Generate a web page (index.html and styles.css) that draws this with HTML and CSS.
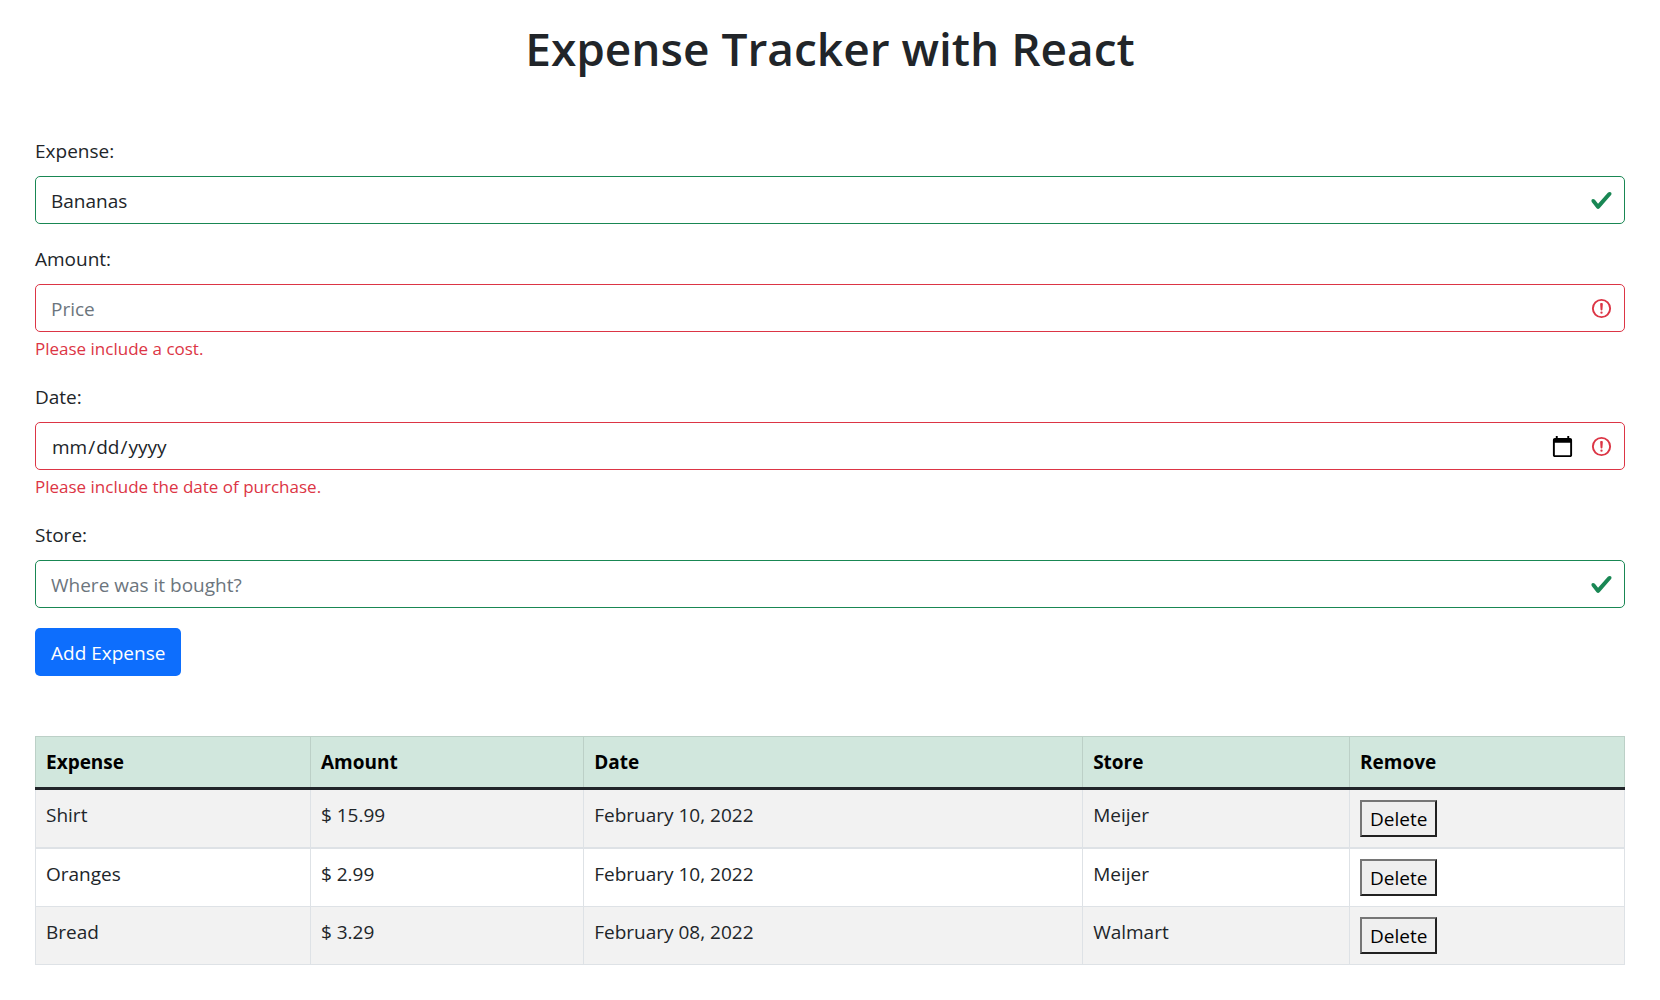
FILE: index.html
```html
<!DOCTYPE html>
<html lang="en">
<head>
  <meta charset="utf-8">
  <meta name="viewport" content="width=device-width, initial-scale=1">
  <title>Expense Tracker with React</title>
  <link rel="stylesheet" href="styles.css">
</head>
<body>
  <svg class="symbols" aria-hidden="true">
    <symbol id="icon-valid" viewBox="0 0 8 8">
      <path fill="#198754" d="M2.3 6.73.6 4.53c-.4-1.04.46-1.4 1.1-.8l1.1 1.4 3.4-3.8c.6-.63 1.6-.27 1.2.7l-4 4.6c-.43.5-.8.4-1.1.1z"/>
    </symbol>
    <symbol id="icon-invalid" viewBox="0 0 12 12">
      <circle cx="6" cy="6" r="4.5" fill="none" stroke="#dc3545"/>
      <path fill="none" stroke="#dc3545" stroke-linejoin="round" d="M5.8 3.6h.4L6 6.5z"/>
      <circle cx="6" cy="8.2" r=".6" fill="#dc3545"/>
    </symbol>
  </svg>

  <main class="page">
    <h1 class="title">Expense Tracker with React</h1>

    <form class="expense-form" novalidate>
      <div class="field">
        <label class="label" for="expense">Expense:</label>
        <div class="control">
          <input class="input input-valid" id="expense" type="text" value="Bananas">
          <svg class="status" aria-hidden="true"><use href="#icon-valid"/></svg>
        </div>
      </div>
      <div class="field">
        <label class="label" for="amount">Amount:</label>
        <div class="control">
          <input class="input input-invalid" id="amount" type="text" placeholder="Price" aria-describedby="amount-error">
          <svg class="status" aria-hidden="true"><use href="#icon-invalid"/></svg>
        </div>
        <p class="feedback" id="amount-error">Please include a cost.</p>
      </div>
      <div class="field">
        <label class="label" for="date">Date:</label>
        <div class="control">
          <input class="input input-invalid" id="date" type="date" aria-describedby="date-error">
          <svg class="status" aria-hidden="true"><use href="#icon-invalid"/></svg>
        </div>
        <p class="feedback" id="date-error">Please include the date of purchase.</p>
      </div>
      <div class="field">
        <label class="label" for="store">Store:</label>
        <div class="control">
          <input class="input input-valid" id="store" type="text" placeholder="Where was it bought?">
          <svg class="status" aria-hidden="true"><use href="#icon-valid"/></svg>
        </div>
      </div>
      <button class="submit" type="submit">Add Expense</button>
    </form>

    <table class="expenses">
      <colgroup>
        <col class="col-expense">
        <col class="col-amount">
        <col class="col-date">
        <col class="col-store">
        <col class="col-remove">
      </colgroup>
      <thead>
        <tr>
          <th scope="col">Expense</th>
          <th scope="col">Amount</th>
          <th scope="col">Date</th>
          <th scope="col">Store</th>
          <th scope="col">Remove</th>
        </tr>
      </thead>
      <tbody>
        <tr>
          <td>Shirt</td>
          <td>$ 15.99</td>
          <td>February 10, 2022</td>
          <td>Meijer</td>
          <td><button class="delete" type="button">Delete</button></td>
        </tr>
        <tr>
          <td>Oranges</td>
          <td>$ 2.99</td>
          <td>February 10, 2022</td>
          <td>Meijer</td>
          <td><button class="delete" type="button">Delete</button></td>
        </tr>
        <tr>
          <td>Bread</td>
          <td>$ 3.29</td>
          <td>February 08, 2022</td>
          <td>Walmart</td>
          <td><button class="delete" type="button">Delete</button></td>
        </tr>
      </tbody>
    </table>
  </main>
</body>
</html>
```
FILE: styles.css
```css
*,
*::before,
*::after {
  box-sizing: border-box;
}

body {
  margin: 0;
  background: #fff;
  color: #212529;
  font-family: "Segoe UI", "Open Sans", "Noto Sans", sans-serif;
  font-size: 19px;
  line-height: 30px;
}

button,
input {
  font: inherit;
}

.symbols {
  display: none;
}

.page {
  padding: 18px 35px 34px;
}

.title {
  margin: 0 0 58px;
  font-size: 46px;
  font-weight: 600;
  line-height: 60px;
  text-align: center;
}

.expense-form {
  display: flex;
  flex-direction: column;
  align-items: flex-start;
  gap: 20px;
  margin-bottom: 60px;
}

.field {
  width: 100%;
}

.label {
  display: block;
  width: fit-content;
  margin-bottom: 10px;
}

.control {
  position: relative;
}

.input {
  display: block;
  width: 100%;
  height: 48px;
  padding: 9px 45px 7px 15px;
  border: 1px solid #ced4da;
  border-radius: 5px;
  background: #fff;
  color: #212529;
}

.input::placeholder {
  color: #6c757d;
  opacity: 1;
}

.input::-webkit-calendar-picker-indicator {
  width: 25px;
  height: 25px;
  margin-right: 2px;
}

.input-valid {
  border-color: #198754;
}

.input-invalid {
  border-color: #dc3545;
}

.status {
  position: absolute;
  top: 13px;
  right: 12px;
  width: 23px;
  height: 23px;
  pointer-events: none;
}

.feedback {
  margin: 4px 0 0;
  color: #dc3545;
  font-size: 17px;
  line-height: 26px;
}

.submit {
  height: 48px;
  padding: 9px 16px 7px;
  border: 0;
  border-radius: 5px;
  background: #0d6efd;
  color: #fff;
}

.expenses {
  width: 100%;
  border-collapse: collapse;
  table-layout: fixed;
}

.col-expense,
.col-remove {
  width: 17.3%;
}

.col-amount {
  width: 17.2%;
}

.col-date {
  width: 31.4%;
}

.col-store {
  width: 16.8%;
}

.expenses th,
.expenses td {
  padding: 10px;
  border: 1px solid #dee2e6;
  text-align: left;
  vertical-align: top;
}

.expenses th {
  border-color: #bcd0c7;
  border-bottom: 3px solid #212529;
  background: #d1e7dd;
  color: #000;
  font-weight: 700;
}

.expenses tbody tr:nth-child(odd) {
  background: #f2f2f2;
}

.expenses tbody tr:first-child td {
  border-bottom-width: 2px;
}

.delete {
  display: block;
  height: 37px;
  padding: 1px 8px 0;
  border: 2px solid;
  border-color: #767676 #212121 #212121 #767676;
  border-radius: 0;
  background: #efefef;
  color: #000;
}
```
